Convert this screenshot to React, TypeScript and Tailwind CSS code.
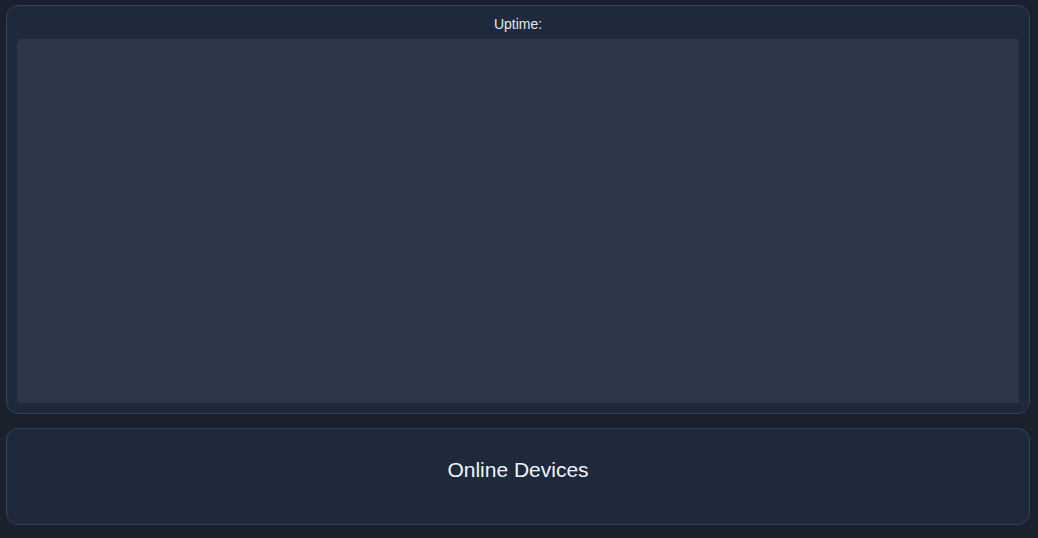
export default function App() {
  return (
    <div
      className="min-h-[538px] w-full bg-[#1a202c] pl-[6px] pt-[5px]"
      style={{ fontFamily: '"Liberation Sans", Arial, sans-serif' }}
    >
      <div className="flex w-[1024px] flex-col gap-[14px]">
        <section className="flex h-[409px] flex-col rounded-xl border border-[#30415f] bg-[#1e293b] px-[10px] pb-[10px] pt-[8px]">
          <h3 className="mb-[5px] text-center text-sm leading-5 text-[#e2e8f0]">Uptime:</h3>
          <div className="flex-1 rounded bg-[#2d3748]" />
        </section>
        <section className="h-[97px] rounded-xl border border-[#30415f] bg-[#1e293b] pt-[27px]">
          <h2 className="text-center text-[21px] leading-7 text-[#f1f5f9]">Online Devices</h2>
        </section>
      </div>
    </div>
  );
}
